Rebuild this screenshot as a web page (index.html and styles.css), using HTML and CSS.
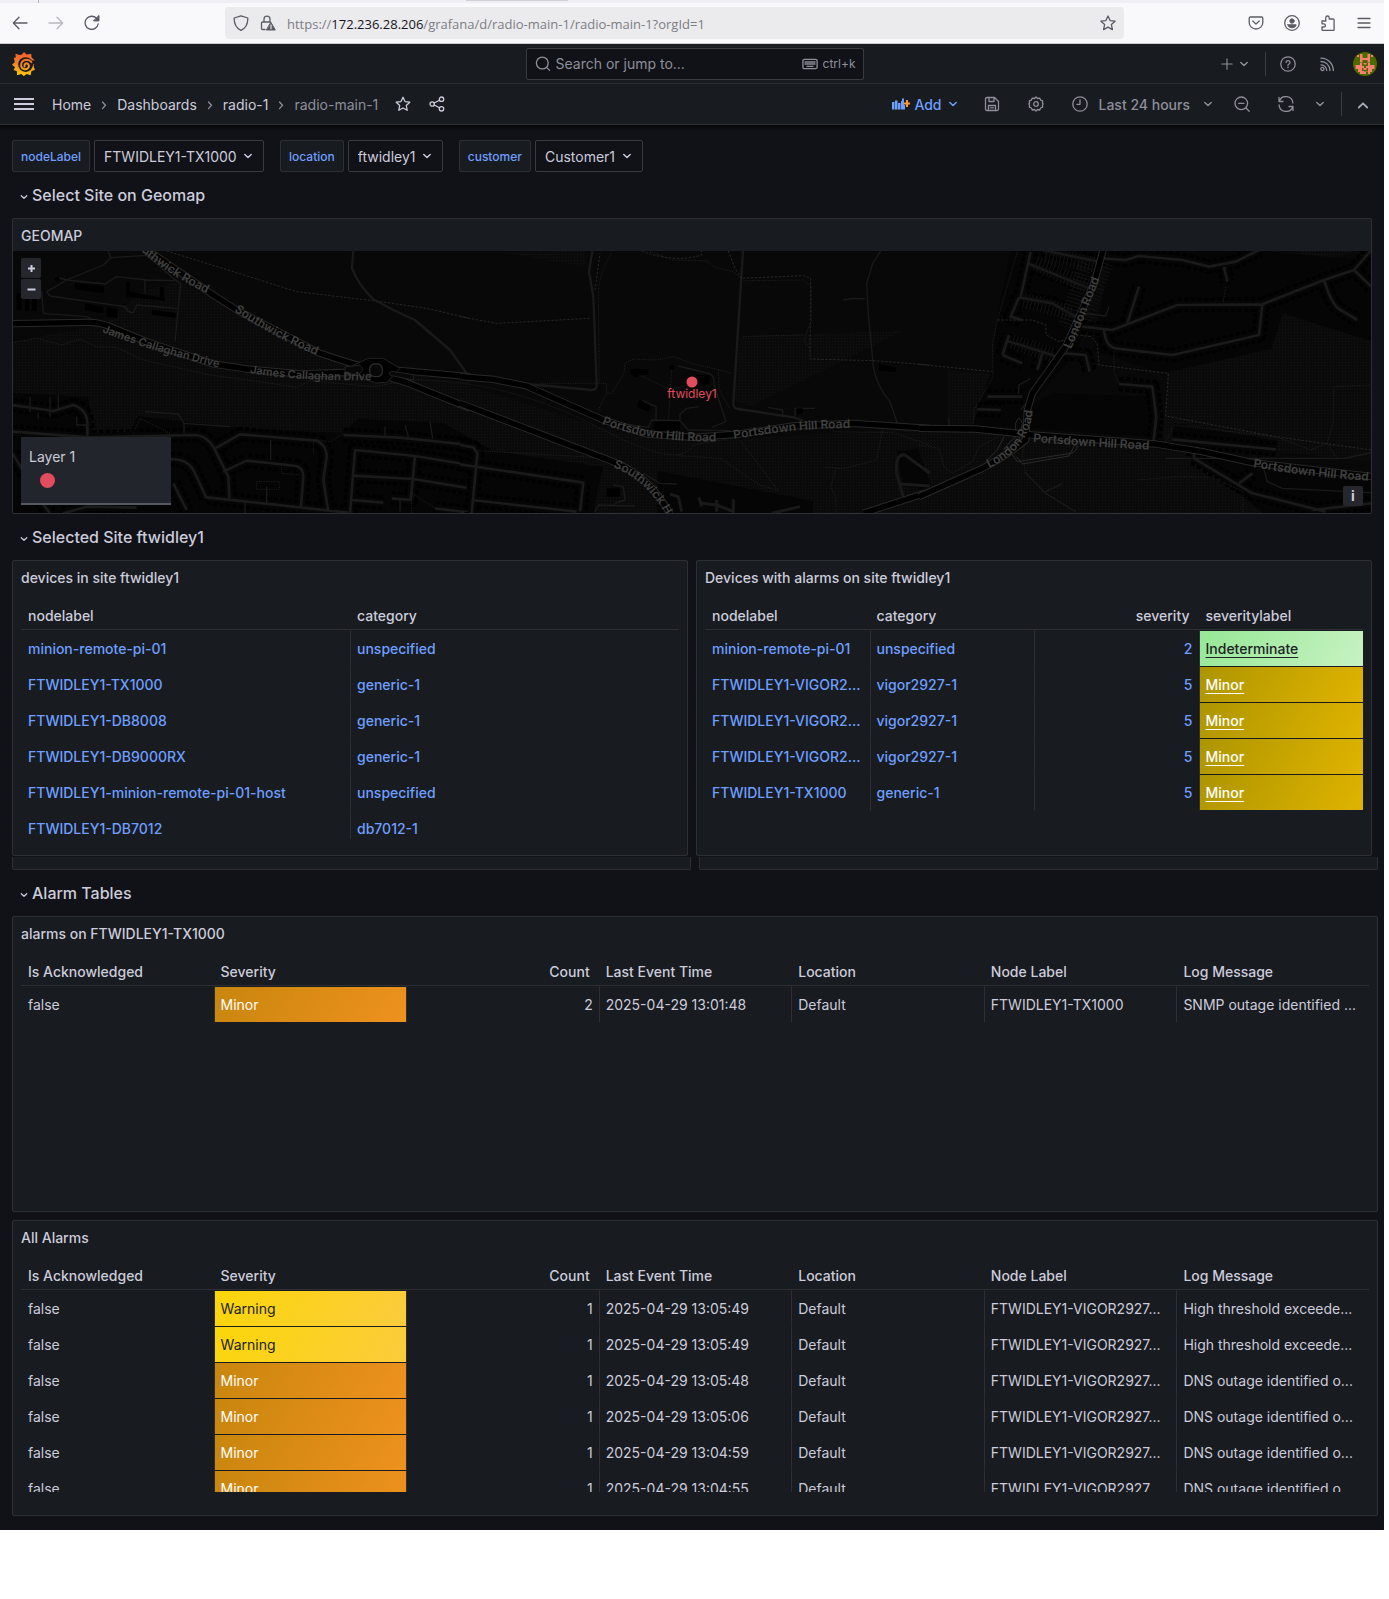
FILE: index.html
```html
<!DOCTYPE html>
<html lang="en">
<head>
<meta charset="utf-8">
<meta name="viewport" content="width=device-width, initial-scale=1">
<title>radio-main-1 - Dashboards - Grafana</title>
<link rel="stylesheet" href="styles.css">
</head>
<body>
<svg class="defs" aria-hidden="true">
  <defs>
    <symbol id="chev" viewBox="0 0 14 14"><path d="M3.800 5.500 7 8.500l3.200-3" fill="none" stroke="currentColor" stroke-width="1.500" stroke-linecap="round" stroke-linejoin="round"/></symbol>
    <symbol id="crumb" viewBox="0 0 8 14"><path d="M2.500 4 5.500 7.300 2.500 10.600" fill="none" stroke="currentColor" stroke-width="1.300" stroke-linecap="round"/></symbol>
  </defs>
</svg>
<div class="window">
  <header class="browser">
    <div class="tabs"><span class="tab-edge"></span><span class="tab-shadow"></span></div>
    <div class="browser-bar">
      <div class="nav-buttons">
        <button class="fx" aria-label="Back"><svg viewBox="0 0 16 16"><path d="M15 8H1.500M7 2.200 1.300 8 7 13.800"/></svg></button>
        <button class="fx fx-off" aria-label="Forward"><svg viewBox="0 0 16 16"><path d="M1 8h13.500M9 2.200 14.700 8 9 13.800"/></svg></button>
        <button class="fx" aria-label="Reload"><svg viewBox="0 0 16 16"><path d="M14.200 9A6.600 6.600 0 1 1 12.500 3.300L14 5M14.700 1v4.700H10"/><path class="solid" d="M14.700 1v4.700H10z"/></svg></button>
      </div>
      <div class="url">
        <svg viewBox="0 0 16 16"><path d="M8 .8 14.800 3c.2 6-1.800 10-6.800 12.400C3 13 1 9 1.200 3z"/></svg>
        <svg viewBox="0 0 16 16"><path d="M5 14.500H2.500q-1 0-1-1V8q0-1 1-1h8M4 7V4.200a3 3 0 0 1 6 0V7"/><path class="solid" d="M11 7.500 15.300 15H6.700z"/><path class="bang" d="M11 10v2.300M11 13v.8"/></svg>
        <span class="url-text">https://<b>172.236.28.206</b>/grafana/d/radio-main-1/radio-main-1?orgId=1</span>
        <button class="fx" aria-label="Bookmark"><svg viewBox="0 0 16 16"><path d="m8 1 2.100 4.600 5 .6-3.700 3.400 1 5L8 12.100l-4.400 2.500 1-5L.9 6.200l5-.6z"/></svg></button>
      </div>
      <div class="fx-tools">
        <button class="fx" aria-label="Pocket"><svg viewBox="0 0 16 16"><path d="M2.500 2h11q1.300 0 1.300 1.300V7.500a6.800 6.500 0 0 1-13.600 0V3.300Q1.200 2 2.500 2zM4.800 6 8 9.100 11.200 6"/></svg></button>
        <button class="fx" aria-label="Account"><svg viewBox="0 0 16 16"><circle cx="8" cy="8" r="7.300"/><circle class="solid" cx="8" cy="6" r="2.200"/><path class="solid" d="M3.800 9.800h8.400q-.5 3-4.200 3t-4.200-3z"/></svg></button>
        <button class="fx" aria-label="Extensions"><svg viewBox="0 0 16 16"><path d="M2 6h3.800V2.700a1.700 1.700 0 0 1 3.400 0V4h3.900q1 0 1 1v9.500q0 1-1 1H3q-1 0-1-1V12h1.800a1.600 1.600 0 0 0 0-3.200H2z"/></svg></button>
        <button class="fx" aria-label="Menu"><svg viewBox="0 0 16 16"><path d="M2 3.500h12M2 8h12M2 12.500h12"/></svg></button>
      </div>
    </div>
  </header>

  <div class="app">
    <div class="topbar">
      <a class="logo" href="#" aria-label="Grafana">
        <svg viewBox="0 0 24 24">
          <defs><linearGradient id="lg" gradientUnits="userSpaceOnUse" x1="0" y1="0" x2="0" y2="24"><stop offset="0" stop-color="#f05a28"/><stop offset=".45" stop-color="#f4802a"/><stop offset="1" stop-color="#fbca0a"/></linearGradient></defs>
          <path fill="url(#lg)" d="M12 0 14.600 2.600 19.200 1.700 19.600 5.400 22.800 8.600 23.400 11.500 21.500 13.500 22.900 17.900 19.500 19 18.500 23.300 14.800 22 11.800 24 9.300 22 5 23.300 4.900 19.300 1.500 18 3 15.300 0 12.800 2.900 10 1.700 5.800 3.800 5.600 3.400 1.800 7.800 3 9.800 2.500z"/>
          <circle cx="13.600" cy="12.600" r="7.400" fill="#181b1f"/>
          <path fill="none" stroke="url(#lg)" stroke-width="2" stroke-linecap="round" d="M12.600 14.400C12 12.300 13.600 11 15.200 11.500c2 .7 2.300 3.400.6 4.800-2.300 1.900-6 .8-6.700-2.200-.7-3.600 1.900-6.400 5.400-6.400 2 0 4 .9 5.200 2.400"/>
          <path fill="#181b1f" d="M19.600 8.200 23.800 8.600 24 13 20.900 12.200z"/>
        </svg>
      </a>
      <label class="search">
        <svg class="ic" viewBox="0 0 16 16"><circle cx="7.300" cy="7" r="5.900"/><path d="m11.600 11.400 3 3"/></svg>
        <input type="search" placeholder="Search or jump to..." aria-label="Search or jump to">
        <svg class="ic kbd" viewBox="0 0 16 16"><rect x=".9" y="3.300" width="14.200" height="9.400" rx="1.500"/><path stroke-dasharray="1.200 1" d="M3 6h10.500M3 8h10.500"/><path d="M5 10.300h6"/></svg>
        <span>ctrl+k</span>
      </label>
      <div class="top-actions">
        <button class="plain new" aria-label="New"><svg class="ic" viewBox="0 0 14 14"><path d="M7 1v12M1 7h12"/></svg><svg class="ch"><use href="#chev"/></svg></button>
        <span class="vr"></span>
        <button class="plain help" aria-label="Help"><svg class="ic" viewBox="0 0 16 16"><circle cx="8" cy="8" r="7.200"/><path d="M6.100 6.500a1.950 1.900 0 1 1 2.700 1.700Q8 8.500 8 9.300M8 11v.7"/></svg></button>
        <button class="plain news" aria-label="News"><svg class="ic" viewBox="0 0 16 16"><circle cx="3.400" cy="13" r="1.600"/><path d="M2 8.800a6 6 0 0 1 5.700 5.700M2 5.500a9 9 0 0 1 9 9M2 2.200a12.300 12.300 0 0 1 12.300 12.300"/></svg></button>
        <button class="plain avatar" aria-label="Profile"><svg viewBox="0 0 24 24"><circle cx="12" cy="12" r="12" fill="#4c6a00"/><path fill="#fa8072" d="M7 2h2.500v4h5V2H17v8.500h-2.500V8h-5v2.500H7zM4 3h2v2H4zM18 3h2v2h-2zM2.500 13H7v-2h2v3h2v2H9v3h2v3H7v-2H5v-3H2.500zM21.500 13H17v-2h-2v3h-2v2h2v3h-2v3h4v-2h2v-3h2.500zM10.500 11h3v1.500h-3zM10.500 16h3v2h-3zM9 19.500h6V22H9z"/></svg></button>
      </div>
    </div>

    <div class="navbar">
      <button class="plain burger" aria-label="Menu"><svg viewBox="0 0 20 14"><path d="M0 2h20M0 7h20M0 12h20"/></svg></button>
      <nav class="crumbs" aria-label="Breadcrumbs">
        <a href="#">Home</a><svg><use href="#crumb"/></svg>
        <a href="#">Dashboards</a><svg><use href="#crumb"/></svg>
        <a href="#">radio-1</a><svg><use href="#crumb"/></svg>
        <span>radio-main-1</span>
      </nav>
      <button class="plain bright star" aria-label="Star"><svg class="ic" viewBox="0 0 16 16"><path d="m8 1.300 2 4.300 4.800.6-3.500 3.300.9 4.800L8 12l-4.200 2.300.9-4.800L1.200 6.200 6 5.600z"/></svg></button>
      <button class="plain bright" aria-label="Share"><svg class="ic" viewBox="0 0 16 16"><circle cx="3.200" cy="8" r="2.200"/><circle cx="12.500" cy="3.200" r="2.200"/><circle cx="12.500" cy="12.800" r="2.200"/><path d="m5.200 7 5.300-2.800M5.200 9l5.300 2.800"/></svg></button>
      <div class="tools">
        <button class="plain add"><svg class="bars" viewBox="0 0 18 12"><path fill="#6e9fff" d="M0 4h2.500v7.500H0zM3 2.500h2.500v9H3zM6 5h2.500v6.500H6zM9 3h1V.5h2V7h1v4.500H9z"/><path fill="#ff9830" d="M14 2h2v2.500h2V6.500h-2V9h-2V6.500h-2.200v-2H14z"/></svg><span>Add</span><svg class="ch"><use href="#chev"/></svg></button>
        <button class="plain" aria-label="Save"><svg class="ic" viewBox="0 0 16 16"><path d="M3 1.500h7.500l4 4V13q0 1.500-1.500 1.500H3Q1.500 14.500 1.500 13V3Q1.500 1.500 3 1.500zM5 1.700v3.800h5V2M4.500 14.300V9.500h7v4.800M6.500 11.800h3"/></svg></button>
        <button class="plain" aria-label="Settings"><svg class="ic" viewBox="0 0 16 16"><circle cx="8" cy="8" r="2.300"/><path d="m8 .9 1.500 1.600 2.200-.4.900 2 2.100.8-.3 2.200L15.100 8l-.7 1.100.3 2.100-2.100.8-.9 2-2.200-.5L8 15.100l-1.500-1.600-2.200.5-.9-2-2.100-.8.300-2.100L.9 8l.7-.9-.3-2.200 2.100-.8.900-2 2.200.4z"/></svg></button>
        <div class="time">
          <button class="plain time-pick"><svg class="ic" viewBox="0 0 16 16"><circle cx="8" cy="8" r="7.200"/><path d="M8 4v4.300H5"/></svg><span>Last 24 hours</span><svg class="ch"><use href="#chev"/></svg></button>
          <button class="plain" aria-label="Zoom out"><svg class="ic" viewBox="0 0 16 16"><circle cx="7.300" cy="7.300" r="6.300"/><path d="m12 12 3.200 3.200M4.700 7.300h5.200"/></svg></button>
        </div>
        <div class="time">
          <button class="plain" aria-label="Refresh"><svg class="ic" viewBox="0 0 16 16"><path d="M1 1.500v4h4M1.300 5.300A7 7 0 0 1 14.900 7M15 14.500v-4h-4M14.700 10.700A7 7 0 0 1 1.100 9"/></svg></button>
          <button class="plain" aria-label="Refresh interval"><svg class="ch"><use href="#chev"/></svg></button>
        </div>
      </div>
      <span class="vr nav-vr"></span>
      <button class="plain" aria-label="Hide controls"><svg class="ic up" viewBox="0 0 16 16"><path d="m3.800 11.500 4.200-4.200 4.200 4.200"/></svg></button>
    </div>

    <main>
      <form class="vars">
        <div class="var"><label for="v1">nodeLabel</label><div class="pick"><select id="v1"><option>FTWIDLEY1-TX1000</option></select><svg class="ch"><use href="#chev"/></svg></div></div>
        <div class="var"><label for="v2">location</label><div class="pick"><select id="v2"><option>ftwidley1</option></select><svg class="ch"><use href="#chev"/></svg></div></div>
        <div class="var"><label for="v3">customer</label><div class="pick"><select id="v3"><option>Customer1</option></select><svg class="ch"><use href="#chev"/></svg></div></div>
      </form>

      <button class="row-title"><svg><use href="#chev"/></svg>Select Site on Geomap</button>

      <section class="panel inset">
        <h2>GEOMAP</h2>
        <div class="map">
          <svg class="map-art" viewBox="0 0 1358 262" preserveAspectRatio="xMidYMid slice" role="img" aria-label="Map of Portsdown Hill Road">
            <defs>
              <pattern id="dots" width="3" height="3" patternUnits="userSpaceOnUse"><rect width="3" height="3" fill="#0a0a0a"/><rect width="1" height="1" fill="#131313"/></pattern>
              <path id="l1" d="M128 0Q160 28 206 48"/>
              <path id="l2" d="M221 60Q265 90 318 110"/>
              <path id="l3" d="M89 81Q140 101 212 118"/>
              <path id="l4" d="M237 122Q290 131 366 129"/>
              <path id="l5" d="M589 173Q640 193 716 190"/>
              <path id="l6" d="M721 188Q790 176 850 177"/>
              <path id="l7" d="M600 216Q635 230 655 268"/>
              <path id="l8" d="M1058 98Q1072 66 1090 18"/>
              <path id="l9" d="M976 217Q1022 196 1020 148"/>
              <path id="l10" d="M1020 191Q1080 196 1146 199"/>
              <path id="l11" d="M1240 216Q1300 227 1375 231"/>
              <g id="west">
                <path id="w1" d="M38 585 160 603 220 585Q262 600 262 640V680M38 665 270 682 590 675Q620 680 640 710L685 800 688 865M510 748Q560 745 580 780L620 865"/>
                <path id="w2" d="M645 715 720 673 950 692Q980 705 980 740L970 810 985 905M670 785 740 752 890 768Q910 775 910 800L903 890M38 730 120 870 150 910M620 862 1045 908M520 820 560 900M190 910 260 890 410 893"/>
                <path id="w3" d="M1030 675 1200 683 1410 705M1050 910 1065 720 1245 738 1410 765M1060 797 1240 807 1410 835M1055 870 1150 878M1245 738 1232 870 1175 865M1305 895 1410 908"/>
              </g>
              <g id="mid"><path d="M0 705 40 712 52 730 35 910M0 763 370 818 360 905M35 870 350 905"/></g>
              <g id="east">
                <path d="M335 125 305 260M325 160 510 235M300 262 400 280 470 320M300 262 275 320 310 330M250 435 270 375M265 393 400 435 420 450M250 435 310 460M370 430 355 480M370 120 540 155"/>
                <path d="M490 350 580 360 775 285 1030 283 1215 210 1305 180 1357 120M555 360Q560 410 590 415L760 435 1020 375 1030 283M660 230 625 340M1215 210Q1240 290 1265 300L1315 330M1305 180 1357 230"/>
                <path d="M550 145 620 150 660 138 790 150 870 170 950 155 1020 120M915 170 925 215M600 522 700 530 712 620 704 690M825 725V745L1000 850 1220 905M1000 790 960 820M760 688 880 700 1070 718M435 430 500 435 512 485M205 560 310 560M175 598 245 600M1180 900 1357 880"/>
              </g>
              <path id="big-a" d="M38 341 260 337Q300 336 330 350L440 395 640 462 740 477 900 492 1080 486 1110 481M430 112 640 255 710 300 960 430 1060 462 1128 475 1410 500M1128 490 1220 518 1410 595"/>
              <path id="big-b" d="M0 500 100 508 200 528 430 630 560 672 700 682 840 672 1000 648 1180 640 1410 655M0 580 460 755Q570 800 630 912M1410 845 1210 910"/>
              <path id="big-c" d="M0 655 170 657 340 675 710 702 850 725 1000 758 1360 800M553 118 525 220 440 410 340 550 325 600 320 690Q250 745 190 775L0 860"/>
            </defs>
            <rect width="1358" height="262" fill="#080808"/>
            <g fill="url(#dots)">
              <path d="M0 91 90 73 130 40 167 30 315 108 365 120 440 130 600 180 680 190 900 178V262H0z"/>
              <path d="M488 1 573 16 572 0z"/><path d="M900 176 1040 184 1358 228V262H900z"/><path d="M934 120 980 122 965 176H934z"/><path d="M1268 62 1358 82V210L1150 190 1155 120 1250 98z"/><path d="M727 85 890 80 738 155 722 150z"/><path d="M1240 30 1290 0H1340L1240 40z"/>
            </g>
            <g fill="#050505">
              <path d="M0 142 75 146 80 184 115 185 125 165 235 178 330 182 345 168 430 172 480 200 590 216 580 262H0z"/>
              <path d="M998 0 1086 0 1065 100 1010 160 1040 142 1140 146 1142 186 960 174 980 115 985 60z"/>
              <path d="M1098 0H1250L1358 10V90L1270 62 1258 98 1150 122 1080 100z"/><path d="M1160 172 1265 190 1262 204 1160 186zM1180 205 1358 226V262H1250z"/><path d="M645 220 800 250V262H645zM884 200 905 198 920 240 890 235z"/>
            </g>
            <g class="m3" transform="translate(-13 -41) scale(.33333)">
              <use href="#west" class="houses"/><use href="#west" class="yard"/><use href="#west" class="street"/>
              <path class="foot" d="M500 123 700 185 890 245 1120 272 1280 295 1410 325"/><path class="foot soft" d="M38 398 110 385 185 405 240 387 290 410 350 412 430 450 630 495 780 515 890 532 930 512 1120 530 1250 508 1410 520M400 670 420 625 510 670M940 730V690L990 695 1030 670M1235 910V850L1305 895"/>
              <path class="lane" d="M325 123 332 143 310 165 200 210 140 245M332 143 440 136 520 205 542 220 525 395M165 200 200 210 315 222 350 200 440 210 525 212M435 210V250M140 245 150 258 375 290Q385 310 400 308L410 285 530 295M125 245 130 310 260 320 310 345M435 605 535 612 552 640 690 650M552 640V670M480 270"/>
              <path class="lane wide" d="M1060 123 1056 175Q1075 225 1120 268L1180 300 1245 330 1350 420 1400 490"/>
              <path class="blk" d="M225 220 312 228V250L225 238zM378 215H390V245L495 265V272L378 260zM455 300 527 308V324L455 314zM255 280 310 290V310L255 300zM320 292 352 296V325L320 320zM50 250H65V300H50zM75 252H88V302H75zM96 252H110V302H96zM480 232H492V262H480zM165 200H178V212H165z"/>
              <g stroke="#1a1a1a" stroke-width="4" fill="none"><path d="M90 560V605M150 560V620M175 555V600M115 610V625M230 620V645H262M812 690V750M1155 650V680M1215 645 1225 680M1290 635 1298 685M800 830V880M735 880V910M1200 865V905"/></g>
              <path class="foot soft" d="M770 815H838V838H770zM845 770V790L900 795"/>
              <use href="#big-a" class="case"/><use href="#big-a" class="core"/>
              <path d="M1050 470 1105 445H1150L1200 475 1160 517 1128 519 1095 508z" fill="#000" stroke="#222" stroke-width="3"/>
              <path d="M1035 470 1080 466Q1095 478 1080 490L1035 494z" fill="#080808" stroke="#222" stroke-width="3"/>
              <path d="M1240 494 1175 484Q1160 490 1175 497L1240 510z" fill="#080808" stroke="#222" stroke-width="3"/>
              <rect x="1109" y="462" width="38" height="38" rx="15" fill="#080808" stroke="#2a2a2a" stroke-width="4"/>
            </g>
            <g class="m3" transform="translate(447 -41) scale(.33333)">
              <use href="#mid" class="houses"/><use href="#mid" class="yard"/><use href="#mid" class="street"/>
              <path class="lane wide" d="M397 123 387 185 400 260 410 525Q410 540 395 540L200 522M849 123 820 580Q818 595 835 597L1000 622 1030 632"/>
              <path class="lane" d="M1262 123 1238 160 1220 220 1225 310 1240 470Q1250 530 1290 575L1312 640M1150 270 1180 265 1215 266M655 468 745 490Q765 495 762 525L798 635 755 652M450 635 565 652 575 630 660 632 685 660 810 662M545 570 588 590V628M715 590 680 595 660 612V630M1005 620V595L1065 595M925 592 968 600V615M405 905 415 885 525 888M460 825 490 830 495 870 465 880M550 790 600 820 650 822"/>
              <path class="foot" d="M0 320 110 340 390 325M405 240 420 130M545 123Q640 160 725 135V123M805 123 825 175 845 205 1030 197 1052 205 1050 447 1240 452 1410 465"/>
              <path class="foot soft" d="M455 130Q415 190 415 260L418 520M570 125 640 150 740 152 760 170 820 185 850 212 1030 210 1055 230V330L1032 390 1052 420M415 600 440 550 455 550 492 490 495 460 520 447 590 450 640 440 700 462 780 480 815 490M775 480 778 540 810 597M635 480 625 630M525 490 630 538 690 525M0 520Q200 540 430 660T700 705L840 680M55 722 400 742M655 737 780 745 900 825 955 842 840 690M1095 772 1150 776 1250 750 1268 655M1128 775 1112 830 1128 865V910M1110 655 1120 665 1300 668 1410 705M850 380 1030 375M240 520H440V550"/>
              <path class="blk" d="M512 477H565V495H540L530 503 512 492zM630 465H642V478H630zM540 568 572 590 568 605 530 590zM583 635H660V662H583zM708 495 752 495 745 525H730L708 512zM1257 462 1308 472V486L1257 482zM1010 595H1028V612H1010zM440 835H480V860H440z"/>
              <path d="M630 852 655 860 665 905M717 862 725 890M725 880 770 885 820 905V868M770 870V905M935 910 1020 890M1335 878 1310 790Q1305 730 1335 735L1410 790M1320 822 1410 828" fill="none" stroke="#191919" stroke-width="9"/>
              <use href="#big-b" class="case"/><use href="#big-b" class="core"/>
            </g>
            <g class="m3" transform="translate(906 -41) scale(.33333)">
              <use href="#east" class="houses"/><use href="#east" class="yard"/><use href="#east" class="street"/>
              <path d="M350 160 505 228M315 270 460 310M380 135 530 165M280 395 400 435M500 160 440 350M560 160 500 330" fill="none" stroke="#131313" stroke-width="46" stroke-dasharray="3 8"/>
              <path class="foot" d="M0 463 220 485M235 330 340 330 380 345 382 375 420 395 480 375 515 380 535 400 540 465 748 490 740 618 1070 680 1357 720"/>
              <path class="foot soft" d="M295 125 235 330 220 400 222 500 165 600 162 650M585 425V490L600 520M740 695 765 645 1070 680 1175 720 1225 700 1242 640 1245 530 1357 525M1225 700 1255 748M655 810 770 800 880 802 972 845V910M320 690 310 735 320 790M920 230 912 280M0 705 60 715 75 770 100 790 160 755 180 710 240 680"/>
              <path class="lane" d="M305 600 330 570M1035 780 1045 815 1090 835 1357 848M740 745H1275L1357 728M298 550 300 525 335 505M90 625V645M320 790 380 850 470 905M380 845 430 820M495 310 560 318 570 290"/>
              <path fill="none" stroke="#2a2a2a" stroke-width="3" d="M255 715 290 680V640Q300 610 310 640L300 690 270 720zM255 680 235 720 205 750M270 720 295 755 455 730Q475 725 475 705M292 740 310 762 450 738 465 710"/>
              <use href="#big-c" class="case"/><use href="#big-c" class="core"/>
            </g>
            <g class="road-names">
              <text><textPath href="#l1">uthwick Road</textPath></text>
              <text><textPath href="#l2">Southwick Road</textPath></text>
              <text class="sm"><textPath href="#l3">James Callaghan Drive</textPath></text>
              <text class="sm"><textPath href="#l4">James Callaghan Drive</textPath></text>
              <text><textPath href="#l5">Portsdown Hill Road</textPath></text>
              <text><textPath href="#l6">Portsdown Hill Road</textPath></text>
              <text><textPath href="#l7">Southwick H</textPath></text>
              <text><textPath href="#l8">London Road</textPath></text>
              <text><textPath href="#l9">London Road</textPath></text>
              <text><textPath href="#l10">Portsdown Hill Road</textPath></text>
              <text><textPath href="#l11">Portsdown Hill Road</textPath></text>
            </g>
            <circle cx="679" cy="131" r="5.500" fill="#e24d5e"/>
            <text class="marker" x="679" y="147">ftwidley1</text>
          </svg>
          <div class="zoomer"><button aria-label="Zoom in"><svg viewBox="0 0 9 9"><path d="M4.500 1v7M1 4.500h7"/></svg></button><button aria-label="Zoom out"><svg viewBox="0 0 9 9"><path d="M.5 4.500h8"/></svg></button></div>
          <div class="legend"><span>Layer 1</span><i></i></div>
          <button class="info" aria-label="Attribution">i</button>
        </div>
      </section>

      <button class="row-title"><svg><use href="#chev"/></svg>Selected Site ftwidley1</button>

      <div class="pair inset">
        <section class="panel">
          <h2>devices in site ftwidley1</h2>
          <div class="scroll">
            <table class="links">
              <thead><tr><th>nodelabel</th><th>category</th></tr></thead>
              <tbody>
                <tr><td><a href="#">minion-remote-pi-01</a></td><td><a href="#">unspecified</a></td></tr>
                <tr><td><a href="#">FTWIDLEY1-TX1000</a></td><td><a href="#">generic-1</a></td></tr>
                <tr><td><a href="#">FTWIDLEY1-DB8008</a></td><td><a href="#">generic-1</a></td></tr>
                <tr><td><a href="#">FTWIDLEY1-DB9000RX</a></td><td><a href="#">generic-1</a></td></tr>
                <tr><td><a href="#">FTWIDLEY1-minion-remote-pi-01-host</a></td><td><a href="#">unspecified</a></td></tr>
                <tr><td><a href="#">FTWIDLEY1-DB7012</a></td><td><a href="#">db7012-1</a></td></tr>
              </tbody>
            </table>
          </div>
        </section>
        <section class="panel">
          <h2>Devices with alarms on site ftwidley1</h2>
          <div class="scroll">
            <table class="links">
              <thead><tr><th>nodelabel</th><th>category</th><th class="num">severity</th><th>severitylabel</th></tr></thead>
              <tbody>
                <tr><td><a href="#">minion-remote-pi-01</a></td><td><a href="#">unspecified</a></td><td class="num"><a href="#">2</a></td><td class="green"><a href="#">Indeterminate</a></td></tr>
                <tr><td><a href="#">FTWIDLEY1-VIGOR2...</a></td><td><a href="#">vigor2927-1</a></td><td class="num"><a href="#">5</a></td><td class="gold"><a href="#">Minor</a></td></tr>
                <tr><td><a href="#">FTWIDLEY1-VIGOR2...</a></td><td><a href="#">vigor2927-1</a></td><td class="num"><a href="#">5</a></td><td class="gold"><a href="#">Minor</a></td></tr>
                <tr><td><a href="#">FTWIDLEY1-VIGOR2...</a></td><td><a href="#">vigor2927-1</a></td><td class="num"><a href="#">5</a></td><td class="gold"><a href="#">Minor</a></td></tr>
                <tr><td><a href="#">FTWIDLEY1-TX1000</a></td><td><a href="#">generic-1</a></td><td class="num"><a href="#">5</a></td><td class="gold"><a href="#">Minor</a></td></tr>
              </tbody>
            </table>
          </div>
        </section>
      </div>
      <div class="pair stubs"><div></div><div></div></div>

      <button class="row-title"><svg><use href="#chev"/></svg>Alarm Tables</button>

      <section class="panel">
        <h2>alarms on FTWIDLEY1-TX1000</h2>
        <div class="scroll">
          <table>
            <thead><tr><th>Is Acknowledged</th><th>Severity</th><th class="num">Count</th><th>Last Event Time</th><th>Location</th><th>Node Label</th><th>Log Message</th></tr></thead>
            <tbody>
              <tr><td>false</td><td class="orange">Minor</td><td class="num">2</td><td>2025-04-29 13:01:48</td><td>Default</td><td>FTWIDLEY1-TX1000</td><td>SNMP outage identified ...</td></tr>
            </tbody>
          </table>
        </div>
      </section>

      <section class="panel">
        <h2>All Alarms</h2>
        <div class="scroll footed">
          <table>
            <thead><tr><th>Is Acknowledged</th><th>Severity</th><th class="num">Count</th><th>Last Event Time</th><th>Location</th><th>Node Label</th><th>Log Message</th></tr></thead>
            <tbody>
              <tr><td>false</td><td class="yellow">Warning</td><td class="num">1</td><td>2025-04-29 13:05:49</td><td>Default</td><td>FTWIDLEY1-VIGOR2927...</td><td>High threshold exceede...</td></tr>
              <tr><td>false</td><td class="yellow">Warning</td><td class="num">1</td><td>2025-04-29 13:05:49</td><td>Default</td><td>FTWIDLEY1-VIGOR2927...</td><td>High threshold exceede...</td></tr>
              <tr><td>false</td><td class="orange">Minor</td><td class="num">1</td><td>2025-04-29 13:05:48</td><td>Default</td><td>FTWIDLEY1-VIGOR2927...</td><td>DNS outage identified o...</td></tr>
              <tr><td>false</td><td class="orange">Minor</td><td class="num">1</td><td>2025-04-29 13:05:06</td><td>Default</td><td>FTWIDLEY1-VIGOR2927...</td><td>DNS outage identified o...</td></tr>
              <tr><td>false</td><td class="orange">Minor</td><td class="num">1</td><td>2025-04-29 13:04:59</td><td>Default</td><td>FTWIDLEY1-VIGOR2927...</td><td>DNS outage identified o...</td></tr>
              <tr><td>false</td><td class="orange">Minor</td><td class="num">1</td><td>2025-04-29 13:04:55</td><td>Default</td><td>FTWIDLEY1-VIGOR2927...</td><td>DNS outage identified o...</td></tr>
            </tbody>
          </table>
        </div>
      </section>
    </main>
  </div>
</div>
</body>
</html>
```
FILE: styles.css
```css
:root {
  --canvas: #111217;
  --panel: #181b1f;
  --line: #2d2f35;
  --text: #ccccdc;
  --dim: #8e8f9a;
  --link: #6e9fff;
}

* { box-sizing: border-box; }

body {
  margin: 0;
  background: #fff;
  color: var(--text);
  font: 14px/22px Inter, "Liberation Sans", sans-serif;
}

button, input, select { font: inherit; color: inherit; }
button { background: none; border: 0; padding: 0; cursor: pointer; }
a { color: inherit; text-decoration: none; }
svg { display: block; flex: none; }

.defs { position: absolute; width: 0; height: 0; }
.window { margin-right: 5px; }

/* Browser chrome */
.tabs { display: flex; height: 3px; background: #f0f0f4; }
.tab-edge { width: 1px; margin-left: 38px; background: #b5b5bd; }
.tab-shadow { width: 102px; height: 1px; margin-left: 427px; background: #cfcfd5; }

.browser-bar {
  display: flex;
  align-items: center;
  height: 41px;
  padding: 0 12px;
  background: #f9f9fb;
  border-bottom: 1px solid #ccc;
}

.nav-buttons, .fx-tools { display: flex; gap: 20px; }
.fx { color: #5b5b66; }
.fx svg, .url svg {
  width: 16px;
  height: 16px;
  fill: none;
  stroke: #5b5b66;
  stroke-width: 1.3;
  stroke-linecap: round;
  stroke-linejoin: round;
}
.fx-off { opacity: .4; }
.fx .solid, .url .solid { fill: #5b5b66; stroke-width: 1; }
.url .bang { stroke: #fff; stroke-width: 1; }

.url {
  display: flex;
  align-items: center;
  gap: 11px;
  flex: 1;
  height: 32px;
  margin: 0 124px 0 125px;
  padding: 0 8px;
  border-radius: 4px;
  background: #ebebee;
}
.url-text {
  flex: 1;
  padding-top: 2px;
  color: #7d7d83;
  font: 13px/20px "Open Sans", "Noto Sans", sans-serif;
}
.url-text b { color: #15141a; font-weight: 400; }

/* Application header */
.app { background: var(--canvas); }

.ic {
  width: 16px;
  height: 16px;
  fill: none;
  stroke: currentColor;
  stroke-width: 1.3;
  stroke-linecap: round;
  stroke-linejoin: round;
}
.ch { width: 14px; height: 14px; }
.plain { display: flex; align-items: center; color: var(--dim); }
.bright { color: var(--text); }
.vr { width: 1px; height: 24px; background: #3a3c42; }

.topbar {
  display: grid;
  grid-template-columns: 1fr 338px 1fr;
  align-items: center;
  height: 40px;
  padding: 0 7px 0 12px;
  background: var(--panel);
  border-bottom: 1px solid var(--line);
}
.logo svg { width: 24px; height: 24px; }

.search {
  display: flex;
  align-items: center;
  height: 32px;
  padding: 0 7px 0 8px;
  background: var(--canvas);
  border: 1px solid #393b41;
  border-radius: 2px;
  color: var(--dim);
  font-size: 12px;
}
.search input {
  flex: 1;
  min-width: 0;
  padding: 0 0 0 5px;
  border: 0;
  outline: 0;
  background: none;
  font-size: 14px;
}
.search input::placeholder { color: var(--dim); }
.kbd { margin-right: 5px; }

.top-actions { display: flex; align-items: center; justify-content: flex-end; }
.new { gap: 4px; margin-right: 14px; }
.new .ic { width: 12px; height: 12px; }
.help { margin-left: 14px; }
.news { margin: 0 18px 0 23px; }
.avatar svg { width: 24px; height: 24px; }

.navbar {
  display: flex;
  align-items: center;
  height: 41px;
  padding: 0 13px 0 14px;
  background: var(--panel);
  border-bottom: 1px solid var(--line);
}
.burger svg { width: 20px; height: 14px; fill: none; stroke: var(--text); stroke-width: 2; }

.crumbs { display: flex; align-items: center; gap: 9px; margin-left: 18px; padding-top: 2px; }
.crumbs svg { width: 8px; height: 14px; color: var(--dim); }
.crumbs span { color: var(--dim); }
.star { margin: 0 18px 0 17px; }

.tools { display: flex; align-items: center; gap: 28px; margin-left: auto; }
.tools .add { gap: 4px; margin-right: -4px; color: var(--link); font-weight: 500; }
.tools span { padding-top: 2px; }
.bars { width: 18px; height: 12px; }
.time { display: flex; align-items: center; gap: 19px; }
.time-pick { gap: 11px; font-weight: 500; }
.nav-vr { margin: 0 13px 0 14px; }
.up { color: #a6a7b3; stroke-width: 1.8; }

/* Dashboard */
main {
  display: flex;
  flex-direction: column;
  gap: 8px;
  padding: 15px 6px 14px 12px;
  background: linear-gradient(#050506, var(--canvas) 5px);
}

.vars { display: flex; gap: 16px; height: 32px; }
.var { display: flex; gap: 4px; }
.var label {
  padding: 1px 8px 0;
  border: 1px solid var(--line);
  border-radius: 2px;
  background: var(--panel);
  color: var(--link);
  font-size: 12px;
  font-weight: 500;
  line-height: 30px;
}
.pick { display: grid; align-items: center; }
.pick > * { grid-area: 1 / 1; }
.pick select {
  height: 32px;
  padding: 2px 26px 0 9px;
  appearance: none;
  background: var(--canvas);
  border: 1px solid #393b41;
  border-radius: 2px;
}
.pick .ch { justify-self: end; margin-right: 9px; pointer-events: none; }

.row-title {
  display: flex;
  align-items: center;
  align-self: flex-start;
  gap: 2px;
  height: 30px;
  padding-left: 6px;
  font-size: 16px;
  font-weight: 500;
}
.row-title svg { width: 12px; height: 12px; margin-top: 3px; }

.panel {
  display: flex;
  flex-direction: column;
  height: 296px;
  min-width: 0;
  overflow: hidden;
  background: var(--panel);
  border: 1px solid var(--line);
  border-radius: 2px;
}
.panel h2 { height: 32px; margin: 0; padding: 1px 8px 0; font-size: 14px; font-weight: 500; line-height: 32px; }
.inset { margin-right: 6px; }
.pair { display: grid; grid-template-columns: 1fr 1fr; gap: 8px; }
.stubs { margin-top: -8px; padding-top: 1px; }
.stubs div {
  height: 13px;
  background: var(--panel);
  border: 1px solid var(--line);
  border-top: 0;
  border-radius: 0 0 2px 2px;
}

/* Tables */
.scroll { flex: 1; min-height: 0; margin: 8px 8px 16px; overflow: hidden; }
.footed { margin-bottom: 23px; }

table { width: 100%; table-layout: fixed; border-spacing: 0; }
th, td { padding: 0 6px 0 7px; text-align: left; white-space: nowrap; overflow: hidden; }
th { height: 29px; padding-top: 2px; border-bottom: 1px solid var(--line); font-weight: 500; }
td { height: 36px; border-bottom: 1px solid var(--panel); }
td + td { padding-left: 6px; border-left: 1px solid var(--line); }
tbody tr:first-child td { height: 37px; border-top: 1px solid var(--panel); }
th.num { padding-right: 9px; text-align: right; }
td.num { text-align: right; }
.links a { color: var(--link); font-weight: 500; }

td.green, td.gold, td.orange, td.yellow { background-clip: padding-box; }
td.green { background-image: linear-gradient(120deg, #96e896, #c8f2c2); }
td.gold { background-image: linear-gradient(120deg, #ad9500, #e0b400); }
td.orange { background-image: linear-gradient(120deg, #c8860e, #ef911e); color: #fff; }
td.yellow { background-image: linear-gradient(120deg, #fbd60a, #fccb3d); color: #202226; }
td.green a, td.gold a { text-decoration: underline; text-underline-offset: 3px; }
td.green a { color: #202226; }
td.gold a { color: #fff; }

/* Geomap */
.map { position: relative; flex: 1; min-height: 0; overflow: hidden; background: #080808; }
.map-art { width: 100%; height: 100%; }
.m3 path, .m3 use { stroke-linejoin: round; }
.houses { fill: none; stroke: #000; stroke-width: 44; stroke-dasharray: 13 7; }
.yard { fill: none; stroke: #060606; stroke-width: 24; }
.street { fill: none; stroke: #1a1a1a; stroke-width: 8; }
.lane { fill: none; stroke: #1a1a1a; stroke-width: 4; }
.wide { stroke-width: 7; }
.foot { fill: none; stroke: #272727; stroke-width: 3; stroke-dasharray: 7 5; }
.soft { stroke: #222; stroke-dasharray: 3 4; }
.blk { fill: #000; }
.case { fill: none; stroke: #282828; stroke-width: 22; }
.core { fill: none; stroke: #000; stroke-width: 16; }
.road-names { fill: #404040; font-size: 12px; font-weight: 600; }
.sm { font-size: 11px; }
.marker { fill: #e24d5e; font-size: 12px; text-anchor: middle; }

.zoomer { position: absolute; top: 7px; left: 8px; display: grid; gap: 1px; }
.zoomer button, .info {
  display: grid;
  place-items: center;
  width: 20px;
  height: 20px;
  background: #25272d;
  border-radius: 2px;
}
.zoomer svg { width: 9px; height: 9px; stroke: var(--text); stroke-width: 2; }
.info {
  position: absolute;
  right: 8px;
  bottom: 7px;
  font: 700 14px/20px Inter, sans-serif;
}
.legend {
  position: absolute;
  left: 8px;
  bottom: 8px;
  width: 150px;
  height: 68px;
  padding: 9px 8px;
  background: #22252b;
  border-bottom: 2px solid #555a62;
}
.legend i {
  display: block;
  width: 15px;
  height: 15px;
  margin: 5px 0 0 11px;
  border-radius: 50%;
  background: #e24d5e;
}
```
